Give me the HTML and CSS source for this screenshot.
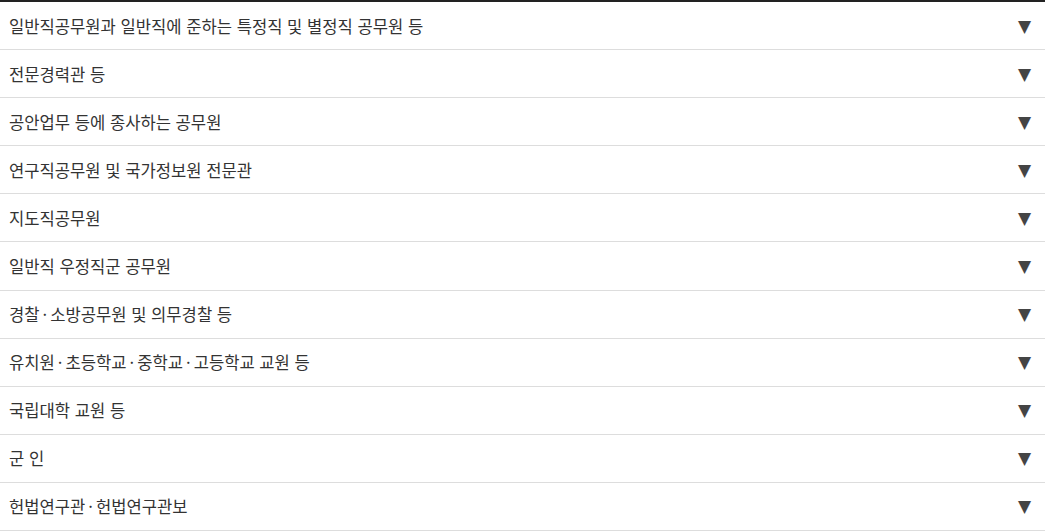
FILE: index.html
```html
<!DOCTYPE html>
<html lang="ko">

<head>
  <meta charset="UTF-8">
  <title>공무원 구분</title>
  <link rel="stylesheet" href="styles.css">
</head>

<body>
  <ul class="accordion">
    <li class="item"><span class="label">일반직공무원과 일반직에 준하는 특정직 및 별정직 공무원 등</span><span class="arrow">▼</span></li>
    <li class="item"><span class="label">전문경력관 등</span><span class="arrow">▼</span></li>
    <li class="item"><span class="label">공안업무 등에 종사하는 공무원</span><span class="arrow">▼</span></li>
    <li class="item"><span class="label">연구직공무원 및 국가정보원 전문관</span><span class="arrow">▼</span></li>
    <li class="item"><span class="label">지도직공무원</span><span class="arrow">▼</span></li>
    <li class="item"><span class="label">일반직 우정직군 공무원</span><span class="arrow">▼</span></li>
    <li class="item"><span class="label">경찰<span class="dot">·</span>소방공무원 및 의무경찰 등</span><span class="arrow">▼</span></li>
    <li class="item"><span class="label">유치원<span class="dot">·</span>초등학교<span class="dot">·</span>중학교<span class="dot">·</span>고등학교 교원 등</span><span class="arrow">▼</span></li>
    <li class="item"><span class="label">국립대학 교원 등</span><span class="arrow">▼</span></li>
    <li class="item"><span class="label">군 인</span><span class="arrow">▼</span></li>
    <li class="item"><span class="label">헌법연구관<span class="dot">·</span>헌법연구관보</span><span class="arrow">▼</span></li>
  </ul>
</body>

</html>
```

FILE: styles.css
```css
body {
  margin: 0;
  font-family: "Noto Sans CJK KR", "Noto Sans", sans-serif;
  color: #333;
  background: #fff;
}

.accordion {
  list-style: none;
  margin: 0;
  padding: 0;
  border-top: 2px solid #222;
}

.item {
  display: flex;
  align-items: center;
  justify-content: space-between;
  height: 47.1px;
  padding: 0 14px 0 9px;
  border-bottom: 1px solid #ddd;
  font-size: 16.6px;
}

.dot {
  padding: 0 3px;
}

.arrow {
  font-family: "DejaVu Sans", sans-serif;
  font-size: 17px;
  color: #444;
}
```
